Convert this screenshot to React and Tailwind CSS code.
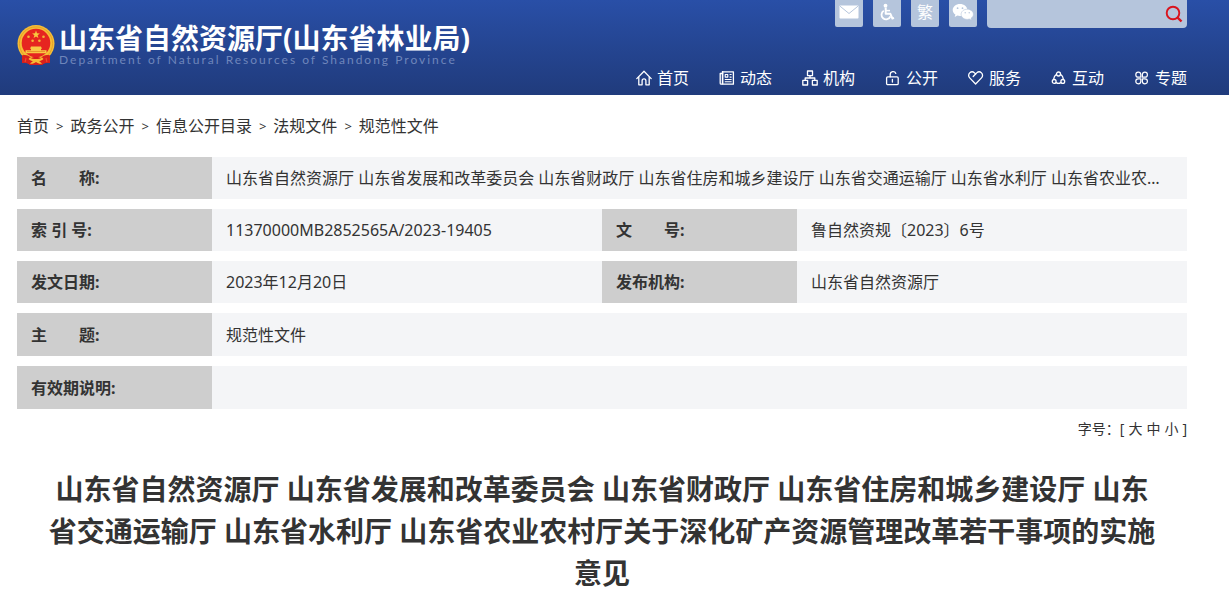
import React, { useState } from 'react'
import clsx from 'clsx'

const NavIcon = ({ children }) => (
  <svg
    viewBox="0 0 16 16"
    className="w-4 h-4 shrink-0"
    fill="none"
    stroke="currentColor"
    strokeWidth="1.3"
    strokeLinecap="round"
    strokeLinejoin="round"
    aria-hidden="true"
  >
    {children}
  </svg>
)

const HomeIcon = () => (
  <NavIcon>
    <path d="M.8 8.6 8 1.2l7.2 7.4" />
    <path d="M2.8 7.2v7.6h3.3v-4a1.9 1.9 0 0 1 3.8 0v4h3.300V7.2" />
  </NavIcon>
)

const NewsIcon = () => (
  <NavIcon>
    <path d="M3.600 1.800h10.800v12.400H2.200a1 1 0 0 1-1-1V3.500h2.400" />
    <path d="M3.600 1.800v12" strokeWidth="1.600" />
    <path d="M6.200 4.500h2.600v2.600H6.200zM11 4.500h1.200M11 7.100h1.200M6.200 9.500h6M6.200 11.800h6" strokeWidth="1.100" />
  </NavIcon>
)

const OrgIcon = () => (
  <NavIcon>
    <rect x="5.500" y="1" width="5" height="4.600" />
    <rect x=".8" y="10.400" width="4.800" height="4.600" />
    <rect x="10.400" y="10.400" width="4.800" height="4.600" />
    <path d="M8 5.600V8M3.200 10.400V8h9.600v2.400" />
  </NavIcon>
)

const UnlockIcon = () => (
  <NavIcon>
    <rect x="1.600" y="6.800" width="11.600" height="7.800" rx="1.200" />
    <path d="M5.200 6.800V4.400a2.900 2.900 0 0 1 5.600-1M7.400 9.400v2.600" />
  </NavIcon>
)

const HeartIcon = () => (
  <NavIcon>
    <path d="M7.600 14 1.700 7.900a3.500 3.500 0 0 1 0-5 3.400 3.400 0 0 1 4.800 0l1.100 1.100 1.100-1.100a3.400 3.400 0 0 1 4.800 0 3.500 3.500 0 0 1 0 5z" />
    <path d="M7.600 4 5.200 6.500" />
  </NavIcon>
)

const InteractIcon = () => (
  <NavIcon>
    <circle cx="7.500" cy="4" r="2" />
    <circle cx="3.200" cy="11.400" r="1.900" />
    <circle cx="11.800" cy="11.400" r="1.900" />
    <path d="M5.500 4.300C4 5.300 2.800 7 2.600 9.300M9.500 4.300c1.500 1 2.700 2.700 2.900 5M5.200 12.600c1.400.900 3.200.900 4.600 0" />
  </NavIcon>
)

const TopicIcon = () => (
  <NavIcon>
    <path
      d="M6.800 7.200H4.200a2.500 2.500 0 1 1 2.600-2.600zM8.400 7.200H11a2.500 2.500 0 1 0-2.600-2.600zM6.800 8.800H4.200a2.500 2.500 0 1 0 2.600 2.600zM8.400 8.800H11a2.500 2.500 0 1 1-2.600 2.600z"
      strokeWidth="1.200"
    />
  </NavIcon>
)

const Emblem = () => (
  <svg viewBox="0 0 38 42" className="w-[38px] h-[42px] shrink-0" aria-hidden="true">
    <path d="M6 28 5 39c4-.600 6 .200 8 2h12c2-1.800 4-2.600 8-2L32 28z" fill="#d8201c" />
    <circle cx="19" cy="19.500" r="18.500" fill="#f6bd35" />
    <circle cx="19" cy="19.500" r="16.600" fill="none" stroke="#e09a26" strokeWidth=".8" />
    <circle cx="19" cy="19" r="14.300" fill="#e62520" />
    <path d="m19 6.600 1 2.700 2.900.100-2.300 1.800.800 2.800-2.400-1.600-2.400 1.600.800-2.800-2.300-1.800 2.900-.100z" fill="#f8c93e" />
    <g fill="#f3b436">
      <circle cx="11.500" cy="12.800" r="1.300" />
      <circle cx="26.500" cy="12.800" r="1.300" />
      <circle cx="15.600" cy="16.800" r="1.300" />
      <circle cx="22.400" cy="16.800" r="1.300" />
    </g>
    <path d="M14 22.500h10l1 2.200h-1v1.600h5.500v3h-21v-3H14v-1.600h-1z" fill="#f8c845" />
    <path d="M10 27.500h18" stroke="#e58a26" strokeWidth=".8" />
    <path d="M5 31.500c4-1 7 0 9 2.500 1.500-1.500 8.500-1.500 10 0 2-2.500 5-3.500 9-2.500v7.500c-4-.500-6 .500-8 2H13c-2-1.500-4-2.500-8-2z" fill="#d8201c" />
    <path d="M13 33.500c2 2 10 2 12 0l1.500 1.500c-2 1.500-3 2-4.500 2l3 2.500c-1.500.800-4 0-6-1.500-2 1.500-4.500 2.300-6 1.500l3-2.500c-1.500 0-2.500-.500-4.500-2z" fill="#f6bd35" />
    <path d="M9 34c-.500 2-.500 3-1 4M29 34c.5 2 .5 3 1 4" stroke="#f04a2c" strokeWidth="1.200" fill="none" />
  </svg>
)

const MailIcon = () => (
  <svg viewBox="0 0 20 14" className="w-5 h-[14px]" aria-hidden="true">
    <rect x=".5" y=".5" width="19" height="13" rx=".8" fill="#fff" />
    <path d="m.8 1 9.200 7.500L19.200 1" fill="none" stroke="#b5c5dc" strokeWidth="1" />
  </svg>
)

const WheelchairIcon = () => (
  <svg viewBox="0 0 16 18" className="w-4 h-[18px]" fill="none" stroke="#fff" aria-hidden="true">
    <circle cx="6.500" cy="2.700" r="1.900" fill="#fff" stroke="none" />
    <path d="M6.700 4.500v6.300h4.700l2 4.700 1.600-.600" strokeWidth="2" strokeLinejoin="round" />
    <path d="M7 7.600h4" strokeWidth="1.500" />
    <path d="M4.800 7.800a4.600 4.600 0 1 0 6.600 5.600" strokeWidth="1.800" />
  </svg>
)

const WechatIcon = () => (
  <svg viewBox="0 0 22 18" className="w-[22px] h-[18px]" aria-hidden="true">
    <path d="M8 1C3.900 1 .7 3.700.7 7c0 1.900 1 3.500 2.700 4.600L2.700 14l2.700-1.400c.800.200 1.700.400 2.600.400 4.100 0 7.400-2.700 7.400-6S12.100 1 8 1z" fill="#fff" />
    <path d="M15.200 6.200c-3.400 0-6.100 2.300-6.100 5.100s2.700 5.100 6.100 5.100c.8 0 1.500-.1 2.200-.3l2.200 1.200-.6-2c1.500-.9 2.400-2.400 2.400-4 0-2.800-2.800-5.100-6.200-5.100z" fill="#fff" stroke="#b5c5dc" strokeWidth=".6" />
    <g fill="#b5c5dc">
      <circle cx="5.600" cy="5.200" r=".9" />
      <circle cx="10.500" cy="5.200" r=".9" />
      <circle cx="13.200" cy="9.800" r=".7" />
      <circle cx="17.200" cy="9.800" r=".7" />
    </g>
  </svg>
)

const tools = [
  { label: '邮箱', content: <MailIcon /> },
  { label: '无障碍', content: <WheelchairIcon /> },
  { label: '繁体', content: '繁' },
  { label: '微信', content: <WechatIcon /> }
]

const navItems = [
  { label: '首页', icon: HomeIcon },
  { label: '动态', icon: NewsIcon },
  { label: '机构', icon: OrgIcon },
  { label: '公开', icon: UnlockIcon },
  { label: '服务', icon: HeartIcon },
  { label: '互动', icon: InteractIcon },
  { label: '专题', icon: TopicIcon }
]

const crumbs = ['首页', '政务公开', '信息公开目录', '法规文件', '规范性文件']

const docTitle =
  '山东省自然资源厅 山东省发展和改革委员会 山东省财政厅 山东省住房和城乡建设厅 山东省交通运输厅 山东省水利厅 山东省农业农村厅关于深化矿产资源管理改革若干事项的实施意见'

const rows = [
  [{ label: '名\u2003\u2003称:', value: docTitle }],
  [
    { label: '索 引 号:', value: '11370000MB2852565A/2023-19405' },
    { label: '文\u2003\u2003号:', value: '鲁自然资规〔2023〕6号' }
  ],
  [
    { label: '发文日期:', value: '2023年12月20日' },
    { label: '发布机构:', value: '山东省自然资源厅' }
  ],
  [{ label: '主\u2003\u2003题:', value: '规范性文件' }],
  [{ label: '有效期说明:', value: '' }]
]

const sizes = [
  { label: '大', className: 'text-[32px] leading-[48px]' },
  { label: '中', className: 'text-[28px] leading-[42px]' },
  { label: '小', className: 'text-[24px] leading-[36px]' }
]

const Header = () => (
  <header className="bg-linear-to-b from-[#294fa7] to-[#203b7c] text-white">
    <div className="flex justify-between pl-[17px] pr-[42px]">
      <a href="#" className="flex items-start gap-1 pt-6">
        <Emblem />
        <span className="flex flex-col">
          <span className="text-[28px] leading-7 font-bold whitespace-nowrap">山东省自然资源厅(山东省林业局)</span>
          <span className="font-['Lato',sans-serif] text-xs leading-4 tracking-[2px] text-[#6f86bb] whitespace-nowrap">
            Department of Natural Resources of Shandong Province
          </span>
        </span>
      </a>

      <div className="flex flex-col items-end">
        <div className="flex items-start gap-[10px]">
          {tools.map((tool) => (
            <button
              key={tool.label}
              type="button"
              aria-label={tool.label}
              className="w-7 h-[27px] pb-1 flex items-center justify-center rounded-b-xs bg-[#b5c5dc] text-base leading-6 cursor-pointer"
            >
              {tool.content}
            </button>
          ))}
          <form className="flex w-[200px] h-7 rounded-b-sm bg-[#b5c5dc]" onSubmit={(e) => e.preventDefault()}>
            <input type="text" aria-label="搜索" className="min-w-0 flex-1 px-2 text-sm text-[#333] outline-none" />
            <button type="submit" aria-label="搜索" className="px-1 cursor-pointer">
              <svg viewBox="0 0 18 18" className="w-[18px] h-[18px]" fill="none" stroke="#d9141e" aria-hidden="true">
                <circle cx="8" cy="8" r="6.300" strokeWidth="1.900" />
                <path d="m12.500 12.500 4 4" strokeWidth="2.400" />
              </svg>
            </button>
          </form>
        </div>

        <nav className="flex gap-[30px] mt-[38px] pb-[5px]">
          {navItems.map(({ label, icon: Icon }) => (
            <a key={label} href="#" className="flex items-center gap-[5px] text-base leading-6 whitespace-nowrap">
              <Icon />
              {label}
            </a>
          ))}
        </nav>
      </div>
    </div>
  </header>
)

const App = () => {
  const [size, setSize] = useState('中')
  const titleClass = sizes.find((s) => s.label === size).className

  return (
    <div
      lang="zh-CN"
      className="min-h-screen bg-white text-[#333] font-['Noto_Sans','Noto_Sans_CJK_SC',sans-serif]"
    >
      <Header />

      <main className="pl-[17px] pr-[42px]">
        {/* Breadcrumb */}
        <nav className="flex items-center gap-[7px] pt-[19px] pb-[9px] text-base leading-6">
          {crumbs.map((crumb, index) => (
            <React.Fragment key={crumb}>
              {index > 0 && <span className="text-[13px] leading-6">&gt;</span>}
              <a href="#">{crumb}</a>
            </React.Fragment>
          ))}
        </nav>

        {/* Document info */}
        <table className="w-full table-fixed border-separate border-spacing-x-0 border-spacing-y-[10px] text-base leading-6">
          <colgroup>
            <col className="w-1/6" />
            <col className="w-1/3" />
            <col className="w-1/6" />
            <col className="w-1/3" />
          </colgroup>
          <tbody>
            {rows.map((cells, index) => (
              <tr key={index} className={index < 3 ? 'h-[42px]' : 'h-[43px]'}>
                {cells.map((cell) => (
                  <React.Fragment key={cell.label}>
                    <th scope="row" className="px-[14px] bg-[#cecece] text-left font-bold whitespace-nowrap">
                      {cell.label}
                    </th>
                    <td colSpan={cells.length === 1 ? 3 : 1} className="px-[14px] bg-[#f4f5f7] truncate">
                      {cell.value}
                    </td>
                  </React.Fragment>
                ))}
              </tr>
            ))}
          </tbody>
        </table>

        {/* Font size */}
        <div className="flex justify-end gap-1 text-sm leading-5">
          <span>字号：[</span>
          {sizes.map((s) => (
            <button key={s.label} type="button" onClick={() => setSize(s.label)} className="cursor-pointer">
              {s.label}
            </button>
          ))}
          <span>]</span>
        </div>

        <h1 className={clsx('px-7 pt-[29px] text-center font-bold', titleClass)}>{docTitle}</h1>
      </main>
    </div>
  )
}

export default App
